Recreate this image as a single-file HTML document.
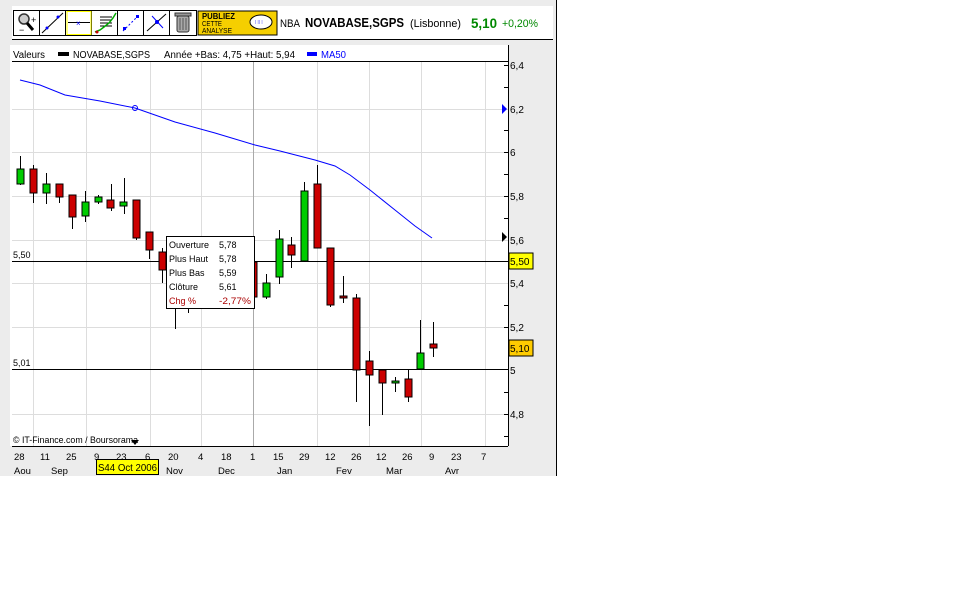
<!DOCTYPE html>
<html><head><meta charset="utf-8"><style>
html,body{margin:0;padding:0;background:#fff;width:962px;height:601px;overflow:hidden}
svg text{font-family:"Liberation Sans",sans-serif}
</style></head><body>
<svg width="962" height="601" xmlns="http://www.w3.org/2000/svg">
<rect x="0" y="0" width="556" height="476" fill="#ececec"/>
<line x1="556.5" y1="0" x2="556.5" y2="476" stroke="#000"/>
<!-- toolbar -->
<rect x="12" y="6" width="541" height="33" fill="#fff"/>
<line x1="12" y1="39.5" x2="553" y2="39.5" stroke="#000"/>
<g stroke="#000" fill="none">
<rect x="13.5" y="10.5" width="183" height="25" />
<line x1="39.5" y1="11" x2="39.5" y2="35"/><line x1="65.5" y1="11" x2="65.5" y2="35"/><line x1="91.5" y1="11" x2="91.5" y2="35"/><line x1="117.5" y1="11" x2="117.5" y2="35"/><line x1="143.5" y1="11" x2="143.5" y2="35"/><line x1="169.5" y1="11" x2="169.5" y2="35"/>
</g>
<rect x="67" y="11.5" width="24" height="23" fill="none" stroke="#ff0" stroke-width="1"/>
<circle cx="24" cy="19" r="5" fill="#ccc" stroke="#333" stroke-width="1.5"/><line x1="27" y1="23" x2="33" y2="30" stroke="#000" stroke-width="3"/>
<text x="31" y="23" font-size="9" fill="#000">+</text><text x="19" y="33" font-size="9" fill="#000">−</text>
<line x1="42" y1="33" x2="63" y2="13" stroke="#000"/><circle cx="47" cy="28" r="1.5" fill="#00f"/><circle cx="58" cy="17" r="1.5" fill="#00f"/>
<line x1="68" y1="22.5" x2="90" y2="22.5" stroke="#000"/><text x="76" y="26" font-size="8" fill="#00f">×</text>
<g stroke="#000" stroke-width="1"><line x1="100" y1="17" x2="112" y2="17"/><line x1="100" y1="20" x2="112" y2="20"/><line x1="100" y1="23" x2="112" y2="23"/><line x1="100" y1="26" x2="112" y2="26"/></g>
<polyline points="95,32 100,30 104,27 109,23 113,18 116,13" fill="none" stroke="#0a0" stroke-width="1.5"/><circle cx="97" cy="32" r="1.5" fill="#c00"/>
<line x1="123" y1="31" x2="139" y2="15" stroke="#00f" stroke-dasharray="2,2"/><rect x="123" y="27" width="3" height="3" fill="#00f"/><rect x="136" y="15" width="3" height="3" fill="#00f"/>
<line x1="147" y1="31" x2="166" y2="14" stroke="#000"/><line x1="152" y1="16" x2="163" y2="28" stroke="#00f"/><circle cx="157" cy="22" r="2" fill="#00f"/>
<rect x="177" y="16" width="12" height="16" rx="2" fill="#aaa" stroke="#333"/><rect x="175" y="13" width="16" height="3" fill="#999" stroke="#333"/>
<line x1="180" y1="18" x2="180" y2="30" stroke="#555"/><line x1="183" y1="18" x2="183" y2="30" stroke="#555"/><line x1="186" y1="18" x2="186" y2="30" stroke="#555"/>
<rect x="198" y="11" width="79" height="24" fill="#f5cf00" stroke="#000"/>
<text x="202" y="19" font-size="8" font-weight="bold" fill="#000" textLength="33" lengthAdjust="spacingAndGlyphs">PUBLIEZ</text>
<text x="202" y="26" font-size="7" fill="#000" textLength="20" lengthAdjust="spacingAndGlyphs">CETTE</text>
<text x="202" y="33" font-size="7" fill="#000" textLength="30" lengthAdjust="spacingAndGlyphs">ANALYSE</text>
<ellipse cx="261" cy="22" rx="11" ry="7" fill="#fff" stroke="#000"/>
<text x="255" y="24" font-size="6" fill="#00f">∷∷</text>
<text x="280" y="27" font-size="11" fill="#000" textLength="20" lengthAdjust="spacingAndGlyphs">NBA</text>
<text x="305" y="27" font-size="13" font-weight="bold" fill="#000" textLength="99" lengthAdjust="spacingAndGlyphs">NOVABASE,SGPS</text>
<text x="410" y="27" font-size="11" fill="#000" textLength="51" lengthAdjust="spacingAndGlyphs">(Lisbonne)</text>
<text x="471" y="28" font-size="14" font-weight="bold" fill="#080" textLength="26" lengthAdjust="spacingAndGlyphs">5,10</text>
<text x="502" y="27" font-size="11" fill="#080" textLength="36" lengthAdjust="spacingAndGlyphs">+0,20%</text>
<!-- chart panel -->
<rect x="10" y="45" width="498" height="401" fill="#fff"/>
<text x="13" y="58" font-size="10" fill="#000" textLength="32" lengthAdjust="spacingAndGlyphs">Valeurs</text>
<rect x="58" y="52" width="11" height="4" fill="#000"/>
<text x="73" y="58" font-size="10" fill="#000" textLength="77" lengthAdjust="spacingAndGlyphs">NOVABASE,SGPS</text>
<text x="164" y="58" font-size="10" fill="#000" textLength="131" lengthAdjust="spacingAndGlyphs">Année +Bas: 4,75 +Haut: 5,94</text>
<rect x="307" y="52" width="10" height="4" fill="#00f"/>
<text x="321" y="58" font-size="10" fill="#00f" textLength="25" lengthAdjust="spacingAndGlyphs">MA50</text>
<line x1="12" y1="61.5" x2="508" y2="61.5" stroke="#000"/>
<g stroke="#ddd" stroke-width="1">
<line x1="12" y1="109.5" x2="508" y2="109.5"/><line x1="12" y1="152.5" x2="508" y2="152.5"/><line x1="12" y1="196.5" x2="508" y2="196.5"/><line x1="12" y1="240.5" x2="508" y2="240.5"/><line x1="12" y1="283.5" x2="508" y2="283.5"/><line x1="12" y1="327.5" x2="508" y2="327.5"/><line x1="12" y1="414.5" x2="508" y2="414.5"/>
<line x1="33.5" y1="62" x2="33.5" y2="446"/><line x1="86.5" y1="62" x2="86.5" y2="446"/><line x1="150.5" y1="62" x2="150.5" y2="446"/><line x1="201.5" y1="62" x2="201.5" y2="446"/><line x1="317.5" y1="62" x2="317.5" y2="446"/><line x1="369.5" y1="62" x2="369.5" y2="446"/><line x1="421.5" y1="62" x2="421.5" y2="446"/><line x1="485.5" y1="62" x2="485.5" y2="446"/>
</g>
<line x1="253.5" y1="62" x2="253.5" y2="446" stroke="#aaa"/>
<line x1="508.5" y1="45" x2="508.5" y2="446" stroke="#000"/>
<g stroke="#000"><line x1="504" y1="65.5" x2="508" y2="65.5"/><line x1="504" y1="87.5" x2="508" y2="87.5"/><line x1="504" y1="130.5" x2="508" y2="130.5"/><line x1="504" y1="152.5" x2="508" y2="152.5"/><line x1="504" y1="174.5" x2="508" y2="174.5"/><line x1="504" y1="196.5" x2="508" y2="196.5"/><line x1="504" y1="218.5" x2="508" y2="218.5"/><line x1="504" y1="305.5" x2="508" y2="305.5"/><line x1="504" y1="327.5" x2="508" y2="327.5"/><line x1="504" y1="392.5" x2="508" y2="392.5"/><line x1="504" y1="414.5" x2="508" y2="414.5"/><line x1="504" y1="436.5" x2="508" y2="436.5"/></g>
<g font-size="10" fill="#000">
<text x="510" y="69">6,4</text><text x="510" y="113">6,2</text><text x="510" y="156">6</text><text x="510" y="200">5,8</text><text x="510" y="244">5,6</text><text x="510" y="287">5,4</text><text x="510" y="331">5,2</text><text x="510" y="374">5</text><text x="510" y="418">4,8</text>
</g>
<polygon points="502,104 507,109 502,114" fill="#00f"/>
<polygon points="502,232 507,237 502,242" fill="#000"/>
<polyline points="20,80 40,85 65,95 100,101 135,108 175,122 215,133 255,145 280,151 315,160 335,166 350,175 370,190 395,210 415,226 432,238" fill="none" stroke="#00f" stroke-width="1"/>
<circle cx="135" cy="108" r="2.5" fill="none" stroke="#00f"/>
<line x1="12" y1="261.5" x2="508" y2="261.5" stroke="#000"/>
<line x1="12" y1="369.5" x2="508" y2="369.5" stroke="#000"/>
<text x="13" y="258" font-size="9" fill="#000">5,50</text>
<text x="13" y="366" font-size="9" fill="#000">5,01</text>
<rect x="509" y="253" width="24" height="16" fill="#ff0" stroke="#000"/><text x="510" y="265" font-size="10">5,50</text>
<rect x="509" y="340" width="24" height="16" fill="#fc0" stroke="#000"/><text x="510" y="352" font-size="10">5,10</text>
<g stroke="#000" stroke-width="1">
<line x1="20.5" y1="156" x2="20.5" y2="185"/><rect x="17" y="169" width="7" height="15" fill="#0c0"/>
<line x1="33.5" y1="165" x2="33.5" y2="203"/><rect x="30" y="169" width="7" height="24" fill="#c00"/>
<line x1="46.5" y1="173" x2="46.5" y2="204"/><rect x="43" y="184" width="7" height="9" fill="#0c0"/>
<line x1="59.5" y1="184" x2="59.5" y2="203"/><rect x="56" y="184" width="7" height="13" fill="#c00"/>
<line x1="72.5" y1="195" x2="72.5" y2="229"/><rect x="69" y="195" width="7" height="22" fill="#c00"/>
<line x1="85.5" y1="191" x2="85.5" y2="222"/><rect x="82" y="202" width="7" height="14" fill="#0c0"/>
<line x1="98.5" y1="195" x2="98.5" y2="204"/><rect x="95" y="197" width="7" height="5" fill="#0c0"/>
<line x1="111.5" y1="184" x2="111.5" y2="211"/><rect x="107" y="200" width="7" height="8" fill="#c00"/>
<line x1="124.5" y1="178" x2="124.5" y2="214"/><rect x="120" y="202" width="7" height="4" fill="#0c0"/>
<line x1="136.5" y1="200" x2="136.5" y2="240"/><rect x="133" y="200" width="7" height="38" fill="#c00"/>
<line x1="149.5" y1="232" x2="149.5" y2="259"/><rect x="146" y="232" width="7" height="18" fill="#c00"/>
<line x1="162.5" y1="248" x2="162.5" y2="283"/><rect x="159" y="252" width="7" height="18" fill="#c00"/>
<line x1="175.5" y1="300" x2="175.5" y2="329"/>
<line x1="188.5" y1="300" x2="188.5" y2="313"/>
<line x1="253.5" y1="262" x2="253.5" y2="297"/><rect x="250" y="262" width="7" height="35" fill="#c00"/>
<line x1="266.5" y1="274" x2="266.5" y2="299"/><rect x="263" y="283" width="7" height="14" fill="#0c0"/>
<line x1="279.5" y1="230" x2="279.5" y2="284"/><rect x="276" y="239" width="7" height="38" fill="#0c0"/>
<line x1="291.5" y1="237" x2="291.5" y2="268"/><rect x="288" y="245" width="7" height="10" fill="#c00"/>
<line x1="304.5" y1="182" x2="304.5" y2="261"/><rect x="301" y="191" width="7" height="70" fill="#0c0"/>
<line x1="317.5" y1="165" x2="317.5" y2="248"/><rect x="314" y="184" width="7" height="64" fill="#c00"/>
<line x1="330.5" y1="248" x2="330.5" y2="307"/><rect x="327" y="248" width="7" height="57" fill="#c00"/>
<line x1="343.5" y1="276" x2="343.5" y2="303"/><rect x="340" y="296" width="7" height="2" fill="#c00"/>
<line x1="356.5" y1="294" x2="356.5" y2="402"/><rect x="353" y="298" width="7" height="72" fill="#c00"/>
<line x1="369.5" y1="351" x2="369.5" y2="426"/><rect x="366" y="361" width="7" height="14" fill="#c00"/>
<line x1="382.5" y1="370" x2="382.5" y2="415"/><rect x="379" y="370" width="7" height="13" fill="#c00"/>
<line x1="395.5" y1="377" x2="395.5" y2="392"/><rect x="392" y="381" width="7" height="2" fill="#0c0"/>
<line x1="408.5" y1="369" x2="408.5" y2="402"/><rect x="405" y="379" width="7" height="18" fill="#c00"/>
<line x1="420.5" y1="320" x2="420.5" y2="370"/><rect x="417" y="353" width="7" height="16" fill="#0c0"/>
<line x1="433.5" y1="322" x2="433.5" y2="357"/><rect x="430" y="344" width="7" height="4" fill="#c00"/>
</g>
<rect x="166.5" y="236.5" width="88" height="72" fill="#fff" stroke="#000"/>
<g font-size="9" fill="#000">
<text x="169" y="248">Ouverture</text><text x="219" y="248">5,78</text>
<text x="169" y="262">Plus Haut</text><text x="219" y="262">5,78</text>
<text x="169" y="276">Plus Bas</text><text x="219" y="276">5,59</text>
<text x="169" y="290">Clôture</text><text x="219" y="290">5,61</text>
<text x="169" y="304" fill="#a00">Chg %</text><text x="219" y="304" fill="#a00" textLength="32" lengthAdjust="spacingAndGlyphs">-2,77%</text>
</g>
<text x="13" y="443" font-size="9" fill="#000" textLength="125" lengthAdjust="spacingAndGlyphs">© IT-Finance.com / Boursorama</text>
<line x1="12" y1="446.5" x2="508" y2="446.5" stroke="#000"/>
<g font-size="9.5" fill="#000">
<text x="14" y="460">28</text><text x="40" y="460">11</text><text x="66" y="460">25</text><text x="94" y="460">9</text><text x="116" y="460">23</text><text x="145" y="460">6</text><text x="168" y="460">20</text><text x="198" y="460">4</text><text x="221" y="460">18</text><text x="250" y="460">1</text><text x="273" y="460">15</text><text x="299" y="460">29</text><text x="325" y="460">12</text><text x="351" y="460">26</text><text x="376" y="460">12</text><text x="402" y="460">26</text><text x="429" y="460">9</text><text x="451" y="460">23</text><text x="481" y="460">7</text>
<text x="14" y="474">Aou</text><text x="51" y="474">Sep</text><text x="166" y="474">Nov</text><text x="218" y="474">Dec</text><text x="277" y="474">Jan</text><text x="336" y="474">Fev</text><text x="386" y="474">Mar</text><text x="445" y="474">Avr</text>
</g>
<rect x="96.5" y="459.5" width="62" height="15" fill="#ff0" stroke="#000"/>
<text x="98" y="471" font-size="10" fill="#000" textLength="59" lengthAdjust="spacingAndGlyphs">S44 Oct 2006</text>
<polygon points="131,440 139,440 135,445" fill="#000"/>
</svg>
</body></html>
